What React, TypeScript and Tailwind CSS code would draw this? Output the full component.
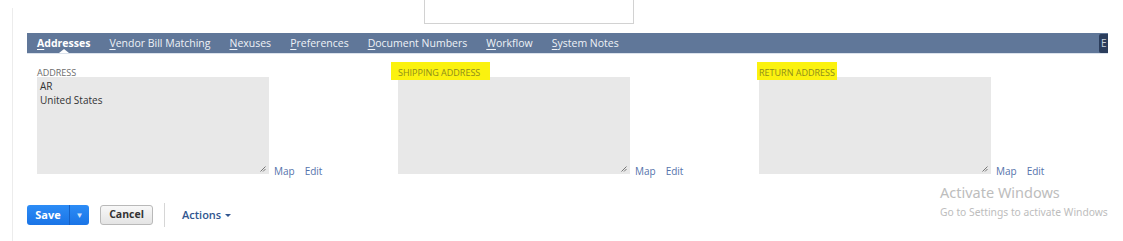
import React from "react";

const tabs = [
  { first: "A", rest: "ddresses", active: true },
  { first: "V", rest: "endor Bill Matching" },
  { first: "N", rest: "exuses" },
  { first: "P", rest: "references" },
  { first: "D", rest: "ocument Numbers" },
  { first: "W", rest: "orkflow" },
  { first: "S", rest: "ystem Notes" },
];

function AddressField({ label, lines, highlight }: { label: string; lines?: string[]; highlight?: "wide" | "tight" }) {
  let labelClass = "mt-[5px] text-[9px] leading-[11px] text-[#6b6b6b] uppercase";
  if (highlight === "wide") {
    labelClass = "relative z-10 -ml-[7px] h-[18px] pl-[7px] pr-[10px] pt-[5px] bg-[#fbf20f] text-[9px] leading-[11px] text-[#8d8d1c] uppercase";
  } else if (highlight === "tight") {
    labelClass = "relative z-10 -ml-[2px] h-[18px] pl-[2px] pr-[2px] pt-[5px] bg-[#fbf20f] text-[9px] leading-[11px] text-[#8d8d1c] uppercase";
  }
  return (
    <div className="flex flex-col w-[361px] shrink-0">
      <div className="h-[15px] flex items-start">
        <span className={labelClass}>{label}</span>
      </div>
      <div className="flex items-end">
        <div className="relative w-[232px] h-[97px] bg-[#e8e8e8] px-[3px] pt-[2px] text-[10px] leading-[14px] text-[#333]">
          {lines?.map((l) => (
            <div key={l}>{l}</div>
          ))}
          <svg className="absolute right-[3px] bottom-[2px]" width="6" height="6" viewBox="0 0 6 6">
            <path d="M5.5 0.5 L0.5 5.5 M5.5 3 L3 5.5" stroke="#777" strokeWidth="1" />
          </svg>
        </div>
        <div className="flex gap-[10px] ml-[5px] mb-[-4px] text-[10px] leading-[14px] text-[#5573ab]">
          <span>Map</span>
          <span>Edit</span>
        </div>
      </div>
    </div>
  );
}

export default function App() {
  return (
    <div className="relative w-[1123px] h-[241px] bg-white overflow-hidden font-['Open_Sans',sans-serif]">
      <div className="absolute left-[12px] top-[8px] bottom-0 w-px bg-[#ececec]" />

      {/* top field */}
      <div className="ml-[424px] w-[210px] h-[24px] border-x border-b border-[#d2d2d2]" />

      {/* tab bar */}
      <div className="mt-[9px] ml-[27px] w-[1081px] border-b border-[#dbe2ec]">
        <div className="relative flex items-center h-[20px] bg-[#607799] pl-[10px] overflow-hidden">
          {tabs.map((t) => (
            <div
              key={t.rest}
              className={
                "relative mr-[19px] text-[10.5px] leading-[20px] whitespace-nowrap " +
                (t.active ? "font-bold text-white" : "text-[#eef2f7]")
              }
            >
              <span className="underline underline-offset-2">{t.first}</span>
              {t.rest}
              {t.active && (
                <span className="absolute left-1/2 -translate-x-1/2 bottom-0 w-0 h-0 border-x-[5px] border-x-transparent border-b-[4px] border-b-white" />
              )}
            </div>
          ))}
          <div className="absolute right-0 top-[1px] w-[9px] h-[19px] bg-[#2b3d5c] rounded-l-[2px] overflow-hidden text-[10px] leading-[19px] text-[#c9d2de] pl-[2px]">
            E
          </div>
        </div>
      </div>

      {/* address fields */}
      <div className="flex ml-[37px] mt-[8px]">
        <AddressField label="Address" lines={["AR", "United States"]} />
        <AddressField label="Shipping Address" highlight="wide" />
        <AddressField label="Return Address" highlight="tight" />
      </div>

      {/* buttons */}
      <div className="flex items-center ml-[27px] mt-[29px]">
        <div className="flex h-[20px] rounded-[3px] overflow-hidden bg-gradient-to-b from-[#2c8cf6] to-[#1a74e6] text-white text-[11px] font-bold">
          <span className="w-[42px] flex items-center justify-center">Save</span>
          <span className="w-[20px] flex items-center justify-center border-l border-[#1560c4] text-[8px] text-[#cfe2fb]">▼</span>
        </div>
        <div className="ml-[11px] h-[20px] w-[53px] flex items-center justify-center rounded-[3px] border border-[#b9b9b9] bg-gradient-to-b from-[#f8f8f8] to-[#e4e4e4] text-[10.5px] font-bold text-[#333]">
          Cancel
        </div>
        <div className="ml-[11px] w-px h-[24px] bg-[#d6d6d6]" />
        <div className="ml-[17px] flex items-center gap-[4px] text-[11px] text-[#32568f] font-semibold">
          Actions
          <span className="w-0 h-0 border-x-[3px] border-x-transparent border-t-[3px] border-t-[#32568f]" />
        </div>
      </div>

      {/* windows watermark */}
      <div className="absolute left-[940px] top-[182px] text-[#bdbdbd] font-['Noto_Sans',sans-serif]">
        <div className="text-[14.5px] leading-[20px]">Activate Windows</div>
        <div className="text-[10.3px] leading-[15px] mt-[3px]">Go to Settings to activate Windows</div>
      </div>
    </div>
  );
}
